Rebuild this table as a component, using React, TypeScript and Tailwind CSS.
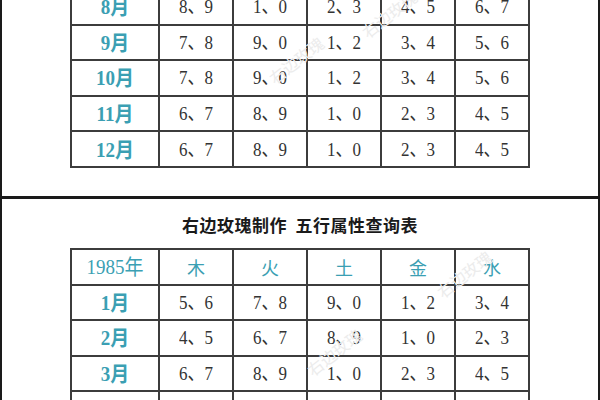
import React from 'react';

const top = [
  ['8月', '8、9', '1、0', '2、3', '4、5', '6、7'],
  ['9月', '7、8', '9、0', '1、2', '3、4', '5、6'],
  ['10月', '7、8', '9、0', '1、2', '3、4', '5、6'],
  ['11月', '6、7', '8、9', '1、0', '2、3', '4、5'],
  ['12月', '6、7', '8、9', '1、0', '2、3', '4、5'],
];

const bottom = [
  ['1月', '5、6', '7、8', '9、0', '1、2', '3、4'],
  ['2月', '4、5', '6、7', '8、9', '1、0', '2、3'],
  ['3月', '6、7', '8、9', '1、0', '2、3', '4、5'],
  ['4月', '', '', '', '', ''],
];

const heads = ['木', '火', '土', '金', '水'];

const serif = { fontFamily: '"Liberation Serif", "Noto Sans CJK SC", serif' };

function Cols() {
  return (
    <colgroup>
      <col className="w-[88px]" />
      <col className="w-[74px]" />
      <col className="w-[74px]" />
      <col className="w-[74px]" />
      <col className="w-[74px]" />
      <col className="w-[74px]" />
    </colgroup>
  );
}

function Row({ cells }: { cells: string[] }) {
  return (
    <tr className="h-[35.6px]">
      <td className="border-2 border-[#3c3c3c] text-center text-[19px] font-bold text-[#3b9fb3] leading-none p-0">
        <span className="inline-block scale-y-[1.1]">{cells[0]}</span>
      </td>
      {cells.slice(1).map((c, i) => (
        <td key={i} className="border-2 border-[#3c3c3c] text-center text-[17px] text-[#333] leading-none p-0">
          <span className="inline-block scale-y-[1.15]">{c}</span>
        </td>
      ))}
    </tr>
  );
}

function Mark({ className }: { className: string }) {
  return (
    <span
      className={`absolute text-[16px] text-[#ececec] -rotate-[38deg] whitespace-nowrap select-none pointer-events-none ${className}`}
      style={{ fontFamily: '"Noto Sans CJK SC", sans-serif' }}
    >
      右边玫瑰
    </span>
  );
}

export default function App() {
  return (
    <div className="relative w-[600px] h-[400px] overflow-hidden bg-white border-x-2 border-[#1a1a1a]" style={serif}>
      <div className="h-[199px] overflow-hidden border-b-[3px] border-[#1a1a1a]">
        <table className="mx-auto -mt-[12px] border-collapse table-fixed w-[458px]">
          <Cols />
          <tbody>
            {top.map((r, i) => (
              <Row key={i} cells={r} />
            ))}
          </tbody>
        </table>
      </div>

      <div className="pt-[14px]">
        <h2
          className="text-center text-[17px] font-bold text-[#1a1a1a] leading-[24px] tracking-[0.5px]"
          style={{ fontFamily: '"Noto Sans CJK SC", sans-serif' }}
        >
          右边玫瑰制作&nbsp;&nbsp;五行属性查询表
        </h2>
        <table className="mx-auto mt-[11px] border-collapse table-fixed w-[458px]">
          <Cols />
          <tbody>
            <tr className="h-[35.6px]">
              <td className="border-2 border-[#3c3c3c] text-center text-[19px] text-[#3b9fb3] leading-none p-0">
                <span className="inline-block scale-y-[1.1]">1985年</span>
              </td>
              {heads.map((h) => (
                <td
                  key={h}
                  className="border-2 border-[#3c3c3c] text-center text-[18px] text-[#3b9fb3] leading-none p-0"
                  style={{ fontFamily: '"Noto Sans CJK SC", sans-serif' }}
                >
                  {h}
                </td>
              ))}
            </tr>
            {bottom.map((r, i) => (
              <Row key={i} cells={r} />
            ))}
          </tbody>
        </table>
      </div>

      <Mark className="left-[262px] top-[48px]" />
      <Mark className="left-[355px] top-[2px]" />
      <Mark className="left-[430px] top-[262px]" />
      <Mark className="left-[300px] top-[340px]" />
    </div>
  );
}
